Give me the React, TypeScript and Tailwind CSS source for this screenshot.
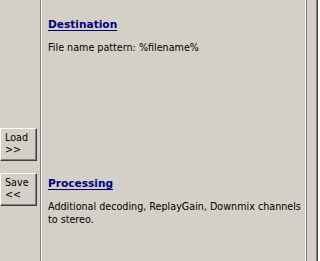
export default function App() {
  return (
    <div className="flex h-[261px] w-[318px] overflow-hidden bg-[#d4d0c8] font-['DejaVu_Sans',sans-serif] text-[9.6px] leading-[13px] text-black">
      {/* left button strip */}
      <div className="flex w-[40px] shrink-0 flex-col gap-[12px] pt-[128px]">
        <PanelButton top="Load" bottom=">>" />
        <PanelButton top="Save" bottom="<<" />
      </div>
      <div className="w-px shrink-0 bg-[#808080]" />
      <div className="w-px shrink-0 bg-white" />

      {/* sections */}
      <div className="flex min-w-0 flex-1 flex-col pl-[6px] pr-[1px] pt-[18px]">
        <div className="h-[159px] shrink-0">
          <a className="text-[10.6px] font-bold text-[#000080] underline decoration-1 underline-offset-[2px]">
            Destination
          </a>
          <p className="mt-[10px]">File name pattern: %filename%</p>
        </div>
        <div>
          <a className="text-[10.6px] font-bold text-[#000080] underline decoration-1 underline-offset-[2px]">
            Processing
          </a>
          <p className="mt-[10px]">
            Additional decoding, ReplayGain, Downmix channels to stereo.
          </p>
        </div>
      </div>

      {/* right edge */}
      <div className="w-px shrink-0 bg-white" />
      <div className="w-px shrink-0 bg-[#808080]" />
      <div className="w-[9px] shrink-0" />
      <div className="w-px shrink-0 bg-[#808080]" />
      <div className="w-px shrink-0 bg-[#404040]" />
    </div>
  );
}

function PanelButton({ top, bottom }: { top: string; bottom: string }) {
  return (
    <button className="flex h-[33px] w-[37px] flex-col items-start border border-b-[#404040] border-l-white border-r-[#404040] border-t-white bg-[#d4d0c8] pl-[4px] pt-[3px] text-left leading-[12px] shadow-[inset_-1px_-1px_0_#808080]">
      <span>{top}</span>
      <span>{bottom}</span>
    </button>
  );
}
